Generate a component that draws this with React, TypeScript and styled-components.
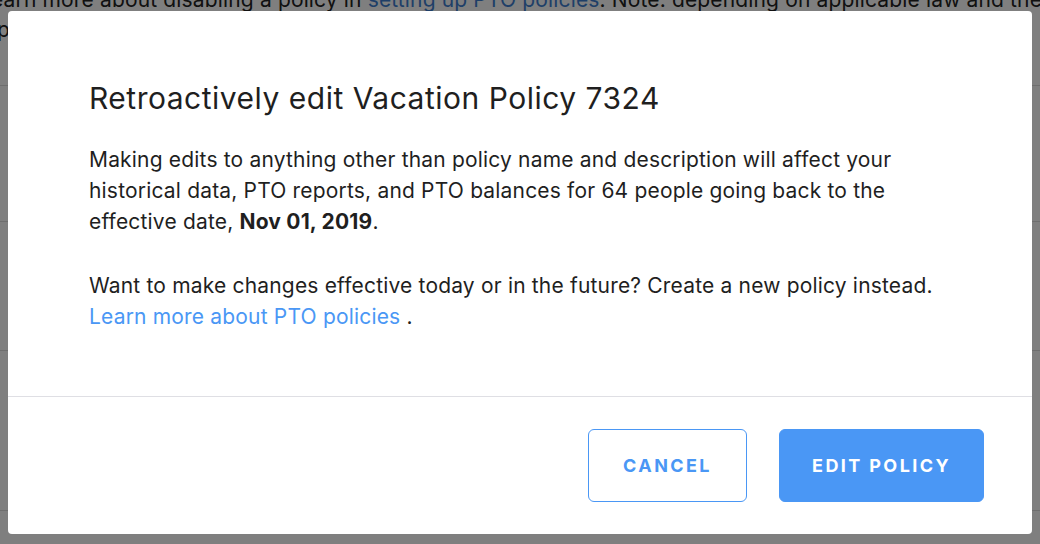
import React from "react";
import styled, { createGlobalStyle } from "styled-components";

const FONT = `Inter, "Noto Sans", sans-serif`;

const Global = createGlobalStyle`
  html, body { margin: 0; padding: 0; }
  body {
    width: 1040px;
    height: 544px;
    overflow: hidden;
    background: #ffffff;
    font-family: ${FONT};
  }
`;

const Page = styled.div`
  position: relative;
  width: 1040px;
  height: 544px;
  overflow: hidden;
  background: #ffffff;
`;

const BackText = styled.div`
  margin-top: -15px;
  font-size: 21px;
  line-height: 30px;
  letter-spacing: 0.15px;
  color: #222;
`;

const BackLine = styled.div<{ $shift: number }>`
  white-space: nowrap;
  margin-left: ${(p) => p.$shift}px;
`;

const BackLink = styled.span`
  color: #3f7fd0;
`;

const BackRow = styled.div<{ $h: number }>`
  height: ${(p) => p.$h}px;
  border-bottom: 1px solid #dcdcdc;
`;

const Overlay = styled.div`
  position: absolute;
  inset: 0;
  background: rgba(0, 0, 0, 0.5);
  padding: 11px 8px 10px 8px;
  box-sizing: border-box;
  display: flex;
`;

const Modal = styled.div`
  flex: 1;
  background: #ffffff;
  border-radius: 4px;
  display: flex;
  flex-direction: column;
`;

const Body = styled.div`
  flex: 1;
  padding: 69px 80px 0 81px;
`;

const Title = styled.h2`
  margin: 0 0 28px 0;
  font-size: 30px;
  line-height: 36px;
  font-weight: 400;
  letter-spacing: 0.5px;
  color: #1f1f1f;
`;

const Para = styled.p<{ $gap?: number }>`
  margin: 0 0 ${(p) => p.$gap ?? 0}px 0;
  font-size: 21px;
  line-height: 31px;
  letter-spacing: 0.18px;
  color: #1f1f1f;
`;

const Link = styled.a`
  color: #4a97f5;
  text-decoration: none;
`;

const Footer = styled.div`
  border-top: 1px solid #dfdfe4;
  padding: 32px 48px 32px 0;
  display: flex;
  justify-content: flex-end;
  gap: 32px;
`;

const Button = styled.button<{ $primary?: boolean; $w: number }>`
  width: ${(p) => p.$w}px;
  height: 73px;
  box-sizing: border-box;
  border-radius: 6px;
  border: 1px solid #4a97f5;
  background: ${(p) => (p.$primary ? "#4a97f5" : "#ffffff")};
  color: ${(p) => (p.$primary ? "#ffffff" : "#4a97f5")};
  font-family: ${FONT};
  font-size: 18px;
  font-weight: 700;
  letter-spacing: 2.4px;
  text-transform: uppercase;
  cursor: pointer;
`;

export default function App() {
  return (
    <Page>
      <Global />
      <BackText>
        <BackLine $shift={-21}>
          Learn more about disabling a policy in <BackLink>setting up PTO policies</BackLink>. Note:
          depending on applicable law and the
        </BackLine>
        <BackLine $shift={-3}>policy settings, disabling a policy may affect balances.</BackLine>
      </BackText>
      <BackRow $h={40} />
      <BackRow $h={135} />
      <BackRow $h={128} />
      <BackRow $h={159} />
      <Overlay>
        <Modal>
          <Body>
            <Title>Retroactively edit Vacation Policy 7324</Title>
            <Para $gap={33}>
              Making edits to anything other than policy name and description will affect your
              historical data, PTO reports, and PTO balances for 64 people going back to the
              effective date, <b>Nov 01, 2019</b>.
            </Para>
            <Para>
              Want to make changes effective today or in the future? Create a new policy instead.
              <br />
              <Link href="#">Learn more about PTO policies</Link> .
            </Para>
          </Body>
          <Footer>
            <Button $w={159}>Cancel</Button>
            <Button $primary $w={205}>Edit Policy</Button>
          </Footer>
        </Modal>
      </Overlay>
    </Page>
  );
}
